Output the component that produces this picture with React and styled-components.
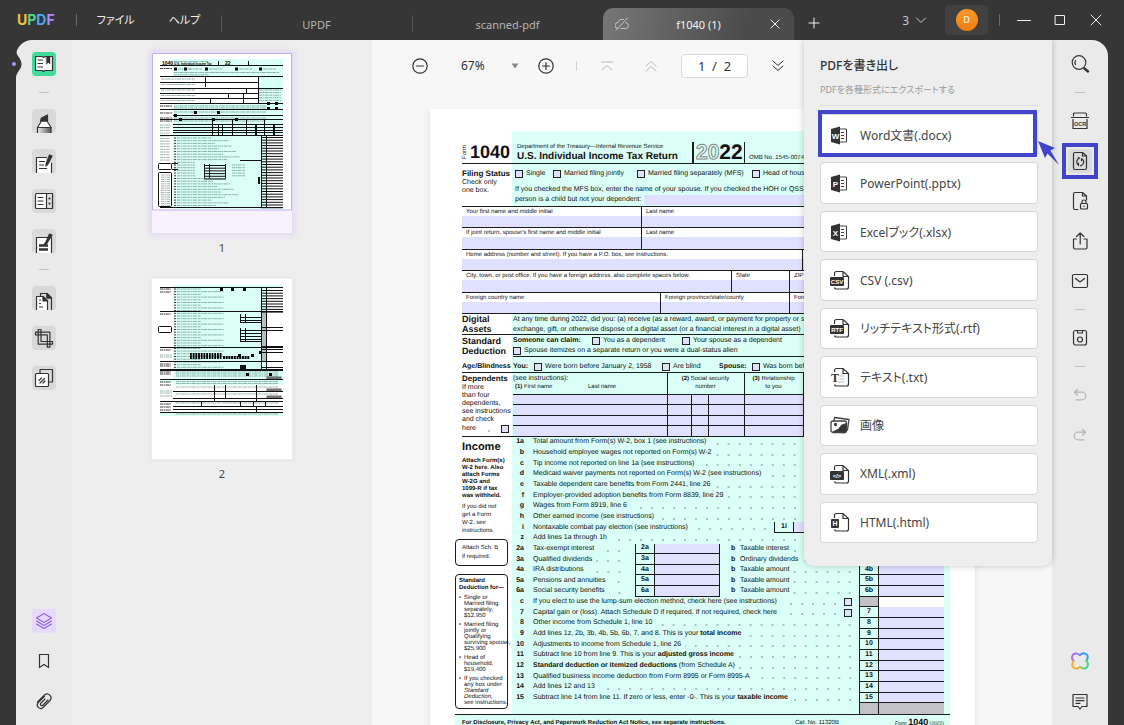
import React from 'react';
import styled, { createGlobalStyle, css } from 'styled-components';

const uiFont = '"Noto Sans", "Noto Sans CJK JP", sans-serif';
const formFont = '"Liberation Sans", Arial, sans-serif';

const colors = {
  chrome: '#373636',
  rail: '#ebeaeb',
  panel: '#eeeeee',
  viewer: '#f7f7f7',
  ink: '#333333',
  muted: '#9a9a9a',
  blue: '#4145c9',
  mint: '#dafff6',
  field: '#dfe1ff',
  rule: '#1c1c1c',
};

const GlobalStyle = createGlobalStyle`
  * {
    box-sizing: border-box;
  }

  body {
    margin: 0;
    background: ${colors.chrome};
    font-family: ${uiFont};
    color: ${colors.ink};
  }

  button,
  input,
  select {
    margin: 0;
    padding: 0;
    border: 0;
    background: none;
    color: inherit;
    font: inherit;
  }

  svg {
    display: block;
    flex: none;
  }
`;

const Window = styled.div`
  display: flex;
  flex-direction: column;
  height: 100vh;
  overflow: hidden;
`;

/* ---------- title bar ---------- */

const TitleBar = styled.header`
  display: flex;
  flex: none;
  align-items: center;
  height: 40px;
  padding: 0 10px 0 17px;
  color: #f0f0f0;
`;

const Logo = styled.div`
  width: 39px;
  margin-right: 20px;
  font-family: Inter, sans-serif;
  font-size: 14px;
  font-weight: 700;
  line-height: 20px;
`;

const LogoLetter = styled.span`
  color: ${(props) => props.$color};
`;

const BarDivider = styled.span`
  width: 1px;
  height: 12px;
  background: #6a6a6a;
`;

const Menu = styled.nav`
  display: flex;
  margin-right: 2px;
  padding-left: 4px;
`;

const MenuButton = styled.button`
  width: 69px;
  font-size: 11px;
  line-height: 20px;
  font-feature-settings: 'palt';
`;

const Tabs = styled.div`
  display: flex;
  align-self: flex-end;
`;

const Tab = styled.button`
  display: flex;
  align-items: center;
  width: 191px;
  height: 32px;
  padding: 0 12px;
  font-size: 11px;
  color: ${(props) => (props.$active ? '#f2f2f2' : '#b4b4b4')};
  border-radius: 10px 10px 0 0;
  background: ${(props) => (props.$active
    ? 'linear-gradient(100deg, #777 0%, #4c4b4b 75%)'
    : 'linear-gradient(#575656, #575656) left 4px / 1px 20px no-repeat')};
`;

const TabTitle = styled.span`
  flex: 1;
`;

const TabAdd = styled.button`
  display: grid;
  place-items: center;
  width: 40px;
  height: 30px;
  margin-top: 6px;
`;

const Spacer = styled.div`
  flex: 1;
`;

const TabCount = styled.button`
  display: flex;
  align-items: center;
  gap: 6px;
  margin-right: 18px;
  font-size: 12px;
  color: #c8c8c8;
`;

const AvatarBox = styled.button`
  display: grid;
  place-items: center;
  width: 43px;
  height: 30px;
  margin-right: 11px;
  border-radius: 4px;
  background: #424141;
`;

const Avatar = styled.span`
  width: 22px;
  height: 22px;
  border-radius: 50%;
  background: linear-gradient(#fb9a2c, #ef7c0c);
  color: #fff;
  font-size: 9px;
  line-height: 22px;
  text-align: center;
`;

const WindowButtons = styled.div`
  display: flex;
  margin-left: 6px;
`;

const WindowButton = styled.button`
  display: grid;
  place-items: center;
  width: 36px;
  height: 30px;
`;

/* ---------- workspace ---------- */

const Workspace = styled.div`
  display: grid;
  grid-template-rows: minmax(0, 1fr);
  grid-template-columns: 56px 300px 1fr 56px;
  flex: 1;
  min-height: 0;
  margin: 0 16px;
  border-radius: 16px 16px 0 0;
  background: ${colors.rail};
`;

const Rail = styled.aside`
  position: relative;
  display: flex;
  flex-direction: column;
  align-items: center;
  gap: 16px;
  padding: 12px 0;
`;

const RailNotch = styled.svg`
  position: absolute;
  top: 4px;
  left: -6px;
`;

const RailButton = styled.button`
  position: relative;
  display: grid;
  flex: none;
  place-items: center;
  width: 24px;
  height: 24px;
  border-radius: 4px;
  background: ${(props) => props.$fill || 'none'};
  color: ${(props) => props.$color || '#333'};

  ${(props) => props.$marked && css`
    &::after {
      content: '';
      position: absolute;
      inset: -6px;
      border: 4px solid ${colors.blue};
    }
  `}
`;

const RailLine = styled.span`
  flex: none;
  width: 10px;
  height: 1px;
  background: #c4c4c4;
`;

/* negative margins take back the gap that the rail adds round it */
const RailSpacer = styled.div`
  flex: 1;
  margin: -8px 0;
`;

const Thumbnails = styled.section`
  display: flex;
  flex-direction: column;
  align-items: center;
  padding-top: 12px;
  background: #efeeef;
`;

const ThumbButton = styled.button`
  display: flex;
  flex-direction: column;
  align-items: center;
  margin-bottom: 18px;
  font-size: 11px;
  line-height: 24px;
  color: #444;
`;

const ThumbFrame = styled.span`
  display: block;
  width: 142px;
  margin-bottom: 2px;
  padding: 1px;
  background: ${(props) => (props.$active ? '#e4dcf8' : 'transparent')};
  box-shadow: ${(props) => (props.$active ? '0 0 5px 3px #e4e0ec' : '0 0 3px #ddd')};
`;

/* ---------- viewer ---------- */

const Viewer = styled.main`
  position: relative;
  display: flex;
  flex-direction: column;
  min-width: 0;
  background: ${colors.viewer};
`;

const ViewerTools = styled.div`
  display: flex;
  flex: none;
  align-items: center;
  height: 69px;
  padding: 0 38px 17px;
`;

const ToolButton = styled.button`
  display: grid;
  place-items: center;
  width: 20px;
  height: 20px;
  margin-right: ${(props) => props.$gap || 0}px;
`;

const ZoomSelect = styled.select`
  width: 44px;
  margin-left: 31px;
  appearance: none;
  font-size: 12px;
  line-height: 20px;
`;

const ToolDivider = styled.span`
  width: 1px;
  height: 10px;
  margin-right: 20px;
  background: #d2d2d2;
`;

const PageInput = styled.input`
  width: 67px;
  height: 24px;
  margin-right: 20px;
  border: 1px solid #d9d9d9;
  border-radius: 4px;
  background: #fff;
  font-size: 13px;
  text-align: center;
`;

const PageArea = styled.div`
  flex: 1;
  min-height: 0;
  overflow: hidden;
  padding: 0 77px 0 58px;
`;

const Sheet = styled.article`
  min-height: 720px;
  padding: 22px 25px 0 32px;
  background: #fff;
  box-shadow: 0 0 5px #ddd;
  color: #111;
  font-family: ${formFont};
  font-size: 7px;
  line-height: 10px;
  text-rendering: geometricPrecision;
  white-space: nowrap;
`;

/* ---------- tax form ---------- */

const Section = styled.section`
  display: grid;
  grid-template-rows: minmax(0, 1fr);
  grid-template-columns: 50px minmax(0, 1fr);
  height: ${(props) => props.$height}px;
  border-bottom: ${(props) => (props.$rule ? 1 : 0)}px solid ${colors.rule};
`;

const Side = styled.div`
  padding-top: ${(props) => props.$top || 0}px;
  line-height: 8px;
`;

const SideTitle = styled.h3`
  margin: 0;
  font-size: ${(props) => props.$size || 9}px;
  line-height: ${(props) => props.$line || 10}px;
`;

const Mint = styled.div`
  min-width: 0;
  overflow: hidden;
  background: ${colors.mint};
  padding: ${(props) => props.$pad || '0'};
`;

const HeaderSide = styled.div`
  display: flex;
  align-items: flex-end;
  gap: 2px;
`;

const FormWord = styled.span`
  writing-mode: vertical-rl;
  rotate: 180deg;
  font-size: 6px;
  line-height: 6px;
  margin-bottom: 4px;
`;

const FormNumber = styled.strong`
  font-size: 18px;
  line-height: 22px;
`;

const HeaderMain = styled.div`
  display: flex;
  align-items: flex-end;
  height: 32px;
  padding-left: 5px;
`;

const HeaderTitle = styled.div`
  width: 175px;
  font-size: 6px;
  line-height: 8px;
`;

const FormTitle = styled.h2`
  margin: 0;
  font-size: 10px;
  line-height: 12px;
`;

const Year = styled.div`
  width: 53px;
  height: 21px;
  padding-left: 2px;
  border: solid ${colors.rule};
  border-width: 0 1px 0 2px;
  font-size: 21px;
  font-weight: 700;
  line-height: 21px;
`;

const YearOutline = styled.span`
  color: transparent;
  -webkit-text-stroke: 1px #888;
`;

const Omb = styled.span`
  padding-left: 4px;
  font-size: 6px;
`;

const Line = styled.div`
  display: flex;
  align-items: center;
  height: ${(props) => props.$height || 10}px;
  margin-top: ${(props) => props.$top || 0}px;
  border-bottom: ${(props) => (props.$rule ? 1 : 0)}px solid ${colors.rule};
`;

const CheckLabel = styled.label`
  display: flex;
  flex: none;
  align-items: center;
  gap: 3px;
  width: ${(props) => (props.$width ? `${props.$width}px` : 'auto')};
  height: 10px;
`;

const Check = styled.input`
  flex: none;
  width: 8px;
  height: 8px;
  appearance: none;
  border: 1px solid #222;
  background: ${colors.field};
`;

const BoxGap = styled.span`
  width: 7px;
`;

const Bold = styled.b`
  flex: none;
  width: ${(props) => (props.$width ? `${props.$width}px` : 'auto')};
`;

const Fields = styled.div`
  display: grid;
  grid-template-rows: repeat(5, 1fr);
  height: 107px;
  margin-right: 6px;
`;

const FieldRow = styled.div`
  display: grid;
  grid-template-columns: ${(props) => props.$columns};
  border-bottom: 1px solid ${colors.rule};
`;

const Field = styled.label`
  display: flex;
  flex-direction: column;
  min-width: 0;
  overflow: hidden;
  padding-top: 1px;
  border-right: 1px solid ${colors.rule};
  font-size: 6px;
  line-height: 8px;
  text-indent: 4px;
`;

const FieldInput = styled.input`
  flex: 1;
  width: 100%;
  min-height: 0;
  background: ${colors.field};
`;

const DependentTable = styled.table`
  width: 431px;
  height: 64px;
  border-collapse: collapse;
  table-layout: fixed;
  font-size: 6px;
  line-height: 8px;

  th {
    height: 21px;
    padding: 0;
    border-right: 1px solid ${colors.rule};
    font-weight: 400;
  }

  td {
    padding: 0;
    border: 1px solid ${colors.rule};
    border-left: 0;
    background: ${colors.field};
  }

  input {
    display: block;
    width: 100%;
    height: 9px;
  }
`;

const NameHead = styled.div`
  display: grid;
  grid-template-columns: 73px 1fr;
  text-align: left;
  padding-left: 2px;
`;

const SeeNote = styled.div`
  text-align: left;
  font-size: 7px;
`;

const Income = styled.div`
  display: grid;
  grid-template-rows: minmax(0, 1fr);
  grid-template-columns: 50px minmax(0, 1fr);
  height: 277px;
`;

const IncomeSide = styled.div`
  display: flex;
  flex-direction: column;
  font-size: 6px;
  line-height: 8px;
`;

const AttachNote = styled.p`
  margin: ${(props) => props.$margin};
  font-size: 6px;
  font-weight: ${(props) => (props.$bold ? 700 : 400)};
  line-height: ${(props) => (props.$bold ? 7 : 8)}px;
`;

const SideBox = styled.div`
  display: flex;
  flex: none;
  flex-direction: column;
  justify-content: ${(props) => (props.$center ? 'center' : 'flex-start')};
  width: 53px;
  height: ${(props) => props.$height}px;
  margin: 0 0 8px -7px;
  padding: ${(props) => props.$pad};
  border: 1px solid ${colors.rule};
  border-radius: 4px;
  background: #fff;
  line-height: ${(props) => props.$line}px;
`;

const Bullets = styled.ul`
  margin: 0;
  padding: 0 0 0 5px;
  list-style: none;
  line-height: 6px;

  li {
    position: relative;
    margin-top: 3px;
  }

  li::before {
    content: '•';
    position: absolute;
    left: -5px;
  }
`;

const IncomeRows = styled.div`
  display: grid;
  grid-template-rows: repeat(26, minmax(0, 1fr));
  padding-right: 6px;
  background: ${colors.mint};
`;

const IncomeRow = styled.div`
  display: flex;
  align-items: center;
  min-width: 0;
`;

const RowNumber = styled.b`
  width: 12px;
  margin-right: 9px;
  text-align: right;
`;

const RowText = styled.span`
  flex: none;
`;

const Leader = styled.span`
  flex: 1;
  align-self: stretch;
  margin-left: 4px;
  background: radial-gradient(circle at 2px 7px, #333 0, transparent 1px) right top / 11px 100%;
`;

const FirstAmount = styled.span`
  display: flex;
  flex: none;
  align-items: center;
  width: 102px;
  height: 100%;
`;

const BoxNumber = styled.b`
  display: flex;
  flex: none;
  align-items: center;
  align-self: stretch;
  justify-content: center;
  width: 20px;
  border: 1px solid ${colors.rule};
  border-top: 0;
  border-bottom-width: ${(props) => (props.$open ? 0 : 1)}px;
  background: ${(props) => props.$fill || 'transparent'};
`;

const BoxAmount = styled.input`
  flex: none;
  align-self: stretch;
  width: 65px;
  min-height: 0;
  border-bottom: 1px solid ${colors.rule};
  border-right: ${(props) => (props.$closed ? 1 : 0)}px solid ${colors.rule};
  background: ${colors.field};
`;

const BoxBlank = styled.span`
  flex: none;
  align-self: stretch;
  width: 65px;
  background: ${(props) => props.$fill};
`;

const LetterB = styled.b`
  width: 9px;
  margin-left: 11px;
`;

const FormFooter = styled.footer`
  display: flex;
  align-items: center;
  height: 16px;
  margin-left: -7px;
  padding: 0 6px 0 7px;
  border-top: 1px solid ${colors.rule};
  background: ${colors.mint};
  font-size: 6px;
`;

const FooterNotice = styled.b`
  width: 333px;
`;

const FooterForm = styled.span`
  margin-left: auto;
  font-size: 5px;

  b {
    font-size: 9px;
  }
`;

/* ---------- export popover ---------- */

const ExportPanel = styled.section`
  position: absolute;
  top: 0;
  right: 0;
  width: 248px;
  padding: 16px 14px 23px 16px;
  border-radius: 0 0 10px 10px;
  background: ${colors.panel};
  box-shadow: 0 0 7px rgba(0, 0, 0, 0.22);
  clip-path: inset(0 -10px -10px -10px);
`;

const ExportTitle = styled.h1`
  margin: 0;
  font-size: 12px;
  font-weight: 500;
  line-height: 20px;
  font-feature-settings: 'palt';
`;

const ExportHint = styled.p`
  margin: 6px 0 0;
  padding-bottom: 7px;
  border-bottom: 1px solid #dedede;
  color: ${colors.muted};
  font-size: 9px;
  line-height: 16px;
  font-feature-settings: 'palt';
`;

const ExportList = styled.div`
  display: grid;
  grid-template-rows: repeat(9, 1fr);
  gap: 7px;
  height: 429px;
  margin-top: 8px;
`;

const ExportButton = styled.button`
  position: relative;
  display: flex;
  align-items: center;
  gap: 10px;
  padding-left: 9px;
  border: 1px solid #d8d8d8;
  border-radius: 4px;
  background: #fff;
  color: #444;
  font-size: 12px;
  font-feature-settings: 'palt';

  ${(props) => props.$marked && css`
    &::after {
      content: '';
      position: absolute;
      inset: -5px 0 -3px -3px;
      border: 4px solid ${colors.blue};
      border-radius: 1px;
    }
  `}
`;

const Pointer = styled.svg`
  position: absolute;
  top: 100px;
  right: -8px;
  z-index: 1;
`;

/* ---------- icons ---------- */

const Icon = ({ size = 20, width = 1.2, children }) => (
  <svg
    width={size}
    height={size}
    viewBox={`0 0 ${size} ${size}`}
    fill="none"
    stroke="currentColor"
    strokeWidth={width}
    strokeLinecap="round"
    strokeLinejoin="round"
    aria-hidden="true"
  >
    {children}
  </svg>
);

const ReaderIcon = () => (
  <Icon size={24}>
    <path d="M3.5 4.5H10l1.500 1 1.500-1h7.500v14H13l-1.500 1-1.500-1H3.500z" fill="#fff" />
    <path d="M6 8h4.500M6 11.500h4.500M6 15h4.500" />
    <path d="M14.500 5h3.500v7l-1.750-1.500L14.500 12z" fill="#333" strokeWidth="0.5" />
  </Icon>
);

const HighlighterIcon = () => (
  <Icon size={24}>
    <defs>
      <linearGradient id="marker">
        <stop offset="0" stopColor="#eee" />
        <stop offset="1" stopColor="#555" />
      </linearGradient>
    </defs>
    <path d="M5.500 18.500l4-6.500h5.500l4 6.500z" fill="#fff" />
    <path d="M8.500 12L9.500 9l6-3v6z" fill="#333" />
    <path d="M5.500 18.500h13.500V25H5.500z" fill="url(#marker)" />
  </Icon>
);

const EditIcon = () => (
  <Icon size={24}>
    <path d="M4.500 24V8.500h10l-1.500 9 6.500-5V24z" fill="#fff" stroke="none" />
    <path d="M4.500 24V8.500h10M19.500 24V14" />
    <path d="M7.500 12.500h5M7.500 16h4M7.500 19.500h7" />
    <path d="M17.500 6L14.500 14l-.5 3 2-2L20 7z" fill="#333" />
  </Icon>
);

const FormIcon = () => (
  <Icon size={24}>
    <rect x="3.5" y="4.5" width="17" height="15" rx="1" fill="#fff" />
    <path d="M14.500 4.500h6v15h-6z" fill="#ddd" />
    <path d="M6 8.500h5M6 12h5M6 15.500h5" />
    <path d="M17.500 8l1.500 2.200h-3zM17.500 16l1.500-2.200h-3z" fill="#333" stroke="none" />
  </Icon>
);

const SignPageIcon = () => (
  <Icon size={24}>
    <path d="M4.500 24V8.500h15V24" fill="#fff" />
    <path d="M7 16.500h9M7 20.500h9" strokeWidth="2.5" strokeLinecap="butt" />
    <path d="M17.500 5l-4 9-1.500 1.500 2.500-.5L20 6z" fill="#333" />
  </Icon>
);

const OrganizeIcon = () => (
  <Icon size={24}>
    <path d="M8.500 10V7.500H15l4.500 4.500v12M15 7.500V12h4.500" />
    <path d="M4.500 24V10.500H11l4.500 4.500v9" fill="#fff" />
    <path d="M11 10.500V15h4.500zM15 7.500V12h4.500z" fill="#333" />
    <path d="M7.500 14h1M7.500 17.500h1M7.500 21h3" />
  </Icon>
);

const CropIcon = () => (
  <Icon size={24}>
    <path d="M6.200 3.500H9v12h11.500v2.700H6.200zM3.500 6.200h14.400v15h-2.600V8.800H3.500z" />
  </Icon>
);

const CompareIcon = () => (
  <Icon size={24}>
    <path d="M8 7V3.500h12.500V16H17" />
    <rect x="3.500" y="7.500" width="13" height="13" rx="1" fill="#fff" />
    <path d="M7 14.500l2.500-2.500M8 17l4.500-4.500M11 17l2-2" />
  </Icon>
);

const LayersIcon = () => (
  <Icon width={1.1}>
    <path d="M10 2.500l7.500 4.500-7.500 4.500L2.500 7zM2.500 10l7.500 4.500 7.500-4.500M2.500 13l7.500 4.500 7.500-4.500" />
  </Icon>
);

const BookmarkIcon = () => (
  <Icon><path d="M5.500 3.500h9v13L10 13.500l-4.500 3z" strokeLinejoin="miter" /></Icon>
);

const ClipIcon = () => (
  <Icon>
    <path d="M3.500 11L10.500 4a3.900 3.900 0 0 1 5.500 5.500l-7 7a3.400 3.400 0 0 1-4.800-4.800l6.300-6.300M11 8l-4.500 4.500a1.500 1.500 0 0 0 2 2L14 9" />
  </Icon>
);

const SearchIcon = () => (
  <Icon>
    <circle cx="9" cy="8.500" r="6.800" />
    <path d="M5.500 10.500a4 4 0 0 1 0-4" />
    <path d="M14.500 14.500l3.500 3" strokeWidth="2.400" />
  </Icon>
);

const OcrIcon = () => (
  <svg width="20" height="20" viewBox="0 0 20 20" fill="none" stroke="#333" strokeWidth="1.2" aria-hidden="true">
    <path d="M3.500 5.500V3a1 1 0 0 1 1-1h11a1 1 0 0 1 1 1v2.500M1 6.500h18M3 8v9.500h14V8" />
    <text x="10" y="15" textAnchor="middle" fontFamily="Liberation Sans" fontWeight="700" fontSize="5.5" fill="#333" stroke="none">OCR</text>
  </svg>
);

const ExportIcon = () => (
  <Icon>
    <path d="M5 1.500h7.500L16.500 5v12a1.500 1.500 0 0 1-1.500 1.500H5A1.500 1.500 0 0 1 3.500 17V3A1.500 1.500 0 0 1 5 1.500zM12.500 1.500V5h4" />
    <path d="M9.500 7.200a3.800 3.800 0 0 0-1.500 6.500M8.500 14.500V12M10.500 14.800a3.800 3.800 0 0 0 2-6.500M11.500 7.500v2.200M9.500 7.200l-1-.7" />
  </Icon>
);

const ProtectIcon = () => (
  <Icon>
    <path d="M8 18.500H5A1.500 1.500 0 0 1 3.500 17V3A1.500 1.500 0 0 1 5 1.500h7.500L16.500 5v4M12.500 1.500V5h4" />
    <rect x="10.500" y="12.500" width="7" height="5.500" rx="1" />
    <path d="M12 12.500V11a2 2 0 0 1 4 0v1.500M14 15v.5" />
  </Icon>
);

const ShareIcon = () => (
  <Icon>
    <path d="M6.500 8h-3v8.500A1.500 1.500 0 0 0 5 18h10.500a1.500 1.500 0 0 0 1.500-1.500V8h-3M10.200 13V2M6.500 5.500L10.200 2l3.700 3.500" />
  </Icon>
);

const MailIcon = () => (
  <Icon>
    <rect x="2.500" y="3.500" width="15" height="13" rx="1.5" />
    <path d="M5.500 7.500l4.500 3.500 4.500-3.500" />
  </Icon>
);

const SaveIcon = () => (
  <Icon>
    <rect x="3.500" y="2.500" width="13" height="14.500" rx="2" />
    <circle cx="10" cy="11.500" r="2.500" />
    <path d="M7.500 2.500V5h5V2.500" />
  </Icon>
);

const UndoIcon = () => (
  <Icon><path d="M7.500 4.500L4.500 7.200l3 2.800M4.500 7.200H12a3.800 3.800 0 0 1 0 7.600H6" /></Icon>
);

const RedoIcon = () => (
  <Icon><path d="M12.500 4.500l3 2.700-3 2.800M15.500 7.200H8a3.800 3.800 0 0 0 0 7.600h6" /></Icon>
);

const AiIcon = () => (
  <svg width="20" height="20" viewBox="0 0 20 20" fill="none" strokeWidth="2" strokeLinecap="round" aria-hidden="true">
    <path d="M3.500 10C.5 7 2.500 1.800 6.500 2.500 8.500 2.800 9 4 10 4" stroke="#a873ec" />
    <path d="M10 4C13 1 18.200 2.500 17.700 6.500 17.400 8.500 16.500 9 16.500 10" stroke="#3f9df0" />
    <path d="M16.500 10c3 3 1 8.200-3 7.500-2-.3-2.500-1.500-3.500-1.500" stroke="#4fd68f" />
    <path d="M10 16c-3 3-8.200 1-7.700-2.500.3-2 1.200-2.500 1.200-3.500" stroke="#f3b334" />
  </svg>
);

const NoteIcon = () => (
  <Icon>
    <path d="M3 3.500h14v12h-5L10 18l-2-2.500H3zM6 7h8M6 9.700h8M6 12.300h4" />
  </Icon>
);

const OfficeIcon = ({ letter }) => (
  <svg width="20" height="20" viewBox="0 0 20 20" aria-hidden="true">
    <path d="M9 4h7.500v13H9M11 7.500h3M11 10.500h3M11 13.500h3" fill="none" stroke="#444" />
    <path d="M1 4l9-2.500v18L1 17z" fill="#333" />
    <text x="5.500" y="13.500" textAnchor="middle" fontFamily="Liberation Sans" fontWeight="700" fontSize="8" fill="#fff">{letter}</text>
  </svg>
);

const BadgeFileIcon = ({ text, wide }) => (
  <svg width="20" height="20" viewBox="0 0 20 20" aria-hidden="true">
    <path d="M4.500 6V3.500a2 2 0 0 1 2-2H13l5.500 5V17a2 2 0 0 1-2 2h-10a2 2 0 0 1-2-1.500M13 1.500v5h5.500" fill="none" stroke="#333" strokeWidth="1.2" />
    <rect x={wide ? 0 : 1} y="7" width={wide ? 14 : 8} height="9" rx="1" fill="#333" />
    <text x={wide ? 7 : 5} y="13.7" textAnchor="middle" fontFamily="Liberation Sans" fontWeight="700" fontSize={wide ? 6 : 7} fill="#fff">{text}</text>
  </svg>
);

const TextFileIcon = () => (
  <svg width="20" height="20" viewBox="0 0 20 20" aria-hidden="true">
    <path d="M4.500 5V3.500a2 2 0 0 1 2-2H13l5.500 5V17a2 2 0 0 1-2 2h-10a2 2 0 0 1-2-1.500M13 1.500v5h5.500" fill="none" stroke="#333" strokeWidth="1.2" />
    <path d="M10 9h4M10 12h4M8 15h6" stroke="#bbb" />
    <text x="5" y="15" textAnchor="middle" fontFamily="Liberation Serif" fontWeight="700" fontSize="12" fill="#333">T</text>
  </svg>
);

const ImageIcon = () => (
  <Icon width={1.3}>
    <path d="M4 5.500l.5-3L19 4.500 17.500 15" />
    <rect x="1" y="6" width="15.500" height="11.500" rx="2" />
    <path d="M3 17l6-3 3-4 4.500-1.500V15l-2 2.500z" fill="#333" />
    <circle cx="5.500" cy="9.500" r="1" fill="#333" />
  </Icon>
);

const ZoomIcon = ({ plus }) => (
  <Icon>
    <circle cx="10" cy="10" r="7.2" />
    <path d={plus ? 'M6.500 10h7M10 6.500v7' : 'M6.500 10h7'} />
  </Icon>
);

/* ---------- page previews ---------- */

// [x, y, width, height] of the heavier rules on each page
const firstRules = [
  [8, 12, 123, 1], [8, 23, 123, 1], [8, 29, 98, 1], [8, 35, 123, 1], [8, 40, 98, 1], [8, 45, 98, 1],
  [8, 50, 123, 1], [8, 56, 123, 1], [21, 62, 110, 1], [8, 66, 123, 1], [21, 71, 110, 1],
  [21, 74, 110, 1], [21, 77, 110, 1], [21, 79, 110, 1], [8, 82, 123, 1], [106, 24, 1, 27],
  [53, 24, 1, 10], [76, 40, 1, 5], [91, 40, 1, 11], [94, 35, 1, 5], [58, 45, 1, 5],
  [66, 8, 1, 4], [96, 8, 1, 4], [60, 67, 1, 15], [80, 67, 1, 15], [94, 67, 1, 15], [112, 67, 1, 15],
  [66, 71, 1, 11], [70, 71, 1, 11], [103, 72, 2, 10], [121, 72, 2, 10],
  [109, 82, 1, 73], [114, 82, 1, 73], [88, 107, 22, 1], [52, 111, 1, 14], [57, 111, 1, 14], [73, 111, 1, 14],
  [106, 124, 2, 7], [8, 154, 123, 1], [20, 110, 6, 1], [20, 116, 6, 1],
];
const secondRules = [
  [8, 8, 123, 1], [8, 32, 123, 1], [8, 68, 123, 1], [8, 82, 123, 1], [8, 90, 123, 1], [8, 91, 123, 1],
  [8, 100, 123, 1], [21, 112, 110, 1], [21, 119, 110, 1], [8, 122, 123, 1], [21, 127, 110, 1],
  [21, 130, 110, 1], [8, 133, 123, 1], [109, 8, 1, 82], [114, 8, 1, 82],
  [62, 106, 1, 16], [73, 106, 1, 14], [104, 106, 1, 16], [49, 122, 1, 5], [88, 122, 1, 5], [101, 122, 1, 5],
  [113, 122, 1, 5], [104, 128, 1, 5], [88, 35, 1, 9], [93, 35, 1, 9], [88, 49, 1, 14], [93, 49, 1, 14], [88, 86, 6, 4],
];

const range = (from, to, step) => Array.from(
  { length: Math.ceil((to - from) / step) },
  (_, i) => from + i * step,
);

const PreviewText = ({ x, y, width, dark }) => (
  <path
    d={`M${x} ${y}h${width}`}
    stroke={dark ? '#111' : '#3d6b63'}
    strokeDasharray="3 .6 1.5 .5 4 .7"
    opacity={dark ? 0.8 : 0.5}
  />
);

const Rules = ({ items }) => items.map(([x, y, w, h]) => (
  <rect key={`${x}-${y}-${w}`} x={x} y={y} width={w} height={h} fill="#111" />
));

const FirstPreview = () => (
  <svg width="140" height="180" viewBox="0 0 140 180" aria-hidden="true">
    <path fill="#fff" d="M0 0h140v157H0z" />
    <path fill="#f8f2ff" d="M0 157h140v23H0z" />
    <path fill={colors.mint} d="M21 6h110v150H21z" />
    <path fill="#fff" d="M21 24h85v26H21zM115 83h16v71h-16z" />
    <text x="10" y="12" fontFamily="Liberation Sans" fontWeight="700" fontSize="5">1040</text>
    <text x="22" y="12" fontFamily="Liberation Sans" fontWeight="700" fontSize="3">U.S. Individual Income Tax</text>
    <text x="73" y="12" fontFamily="Liberation Sans" fontWeight="700" fontSize="5">22</text>
    <PreviewText x={22} y={8.5} width={34} />
    <PreviewText x={8} y={15.5} width={12} dark />
    {[22, 32, 53, 83, 107].map((x) => <rect key={x} x={x} y="14.5" width="3" height="3" />)}
    {[26, 37, 57, 87, 111].map((x) => <PreviewText key={x} x={x} y={16} width={13} />)}
    <PreviewText x={22} y={19.5} width={105} />
    <PreviewText x={22} y={21.8} width={35} />
    {[26, 31.5, 37, 42.5, 47.5].map((y) => <PreviewText key={y} x={9} y={y} width={34} />)}
    {range(37, 50, 2.6).map((y) => <PreviewText key={y} x={107} y={y} width={22} />)}
    {[53, 55, 59, 65, 68].map((y) => <PreviewText key={y} x={22} y={y} width={92} />)}
    {[53, 60, 65, 68].map((y) => <PreviewText key={y} x={8} y={y} width={12} dark />)}
    {[[42, 58], [65, 58], [22, 61], [27, 65], [60, 65], [83, 65], [115, 49], [123, 49], [115, 54], [123, 54]].map(([x, y]) => (
      <rect key={`${x}-${y}`} x={x} y={y} width="3" height="3" />
    ))}
    {range(72, 109, 2.7).map((y) => <PreviewText key={y} x={8} y={y} width={10} />)}
    {range(85, 155, 2.7).map((y, i) => <PreviewText key={y} x={25} y={y} width={i > 8 && i < 15 ? 18 : 34 + ((i * 17) % 30)} />)}
    {range(85, 155, 2.7).map((y) => <PreviewText key={y} x={22} y={y} width={2} dark />)}
    {range(112, 124, 2.7).map((y) => <PreviewText key={y} x={80} y={y} width={13} />)}
    {range(84, 155, 2.7).map((y) => <rect key={y} x="109" y={y} width="22" height="1" fill="#111" />)}
    {range(112, 126, 2.7).map((y) => <rect key={y} x="52" y={y} width="22" height="1" fill="#111" />)}
    <rect x="6.5" y="110.5" width="13" height="6" rx="1" fill="#fff" stroke="#111" />
    <rect x="6.5" y="119.5" width="13" height="34" rx="1" fill="#fff" stroke="#111" />
    {range(122, 153, 2.2).map((y) => <PreviewText key={y} x={9} y={y} width={9} />)}
    <Rules items={firstRules} />
    <path d="M.5.5h139v156.500H.5z" fill="none" stroke="#c3aef0" />
  </svg>
);

const SecondPreview = () => (
  <svg width="140" height="180" viewBox="0 0 140 180" aria-hidden="true">
    <path fill="#fff" d="M0 0h140v180H0z" />
    <path fill={colors.mint} d="M21 6h110v100H21zM8 100h123v3H8zM8 134h123v3H8z" />
    <path fill="#fff" d="M115 9h16v81h-16z" />
    <path fill="#b9bcc0" d="M109 32h5v50h-5z" />
    {range(10, 90, 2.7).map((y, i) => <PreviewText key={y} x={25} y={y} width={24 + ((i * 23) % 46)} />)}
    {range(10, 90, 2.7).map((y) => <PreviewText key={y} x={22} y={y} width={2} dark />)}
    {[10, 13, 35, 71, 85, 87, 93, 95, 103, 106, 125, 128, 131].map((y) => <PreviewText key={y} x={8} y={y} width={11} dark />)}
    {[76, 78, 112, 114, 117].map((y) => <PreviewText key={y} x={8} y={y} width={12} />)}
    {[93, 95, 97, 102.5, 104.5, 108, 115, 124, 135].map((y) => <PreviewText key={y} x={24} y={y} width={102} />)}
    {range(11, 33, 2.7).map((y) => <rect key={y} x="109" y={y} width="22" height="1" fill="#111" />)}
    {[48, 51, 67, 70, 73, 88].map((y) => <rect key={y} x="109" y={y} width="22" height="1" fill="#111" />)}
    {[38, 41, 43, 51, 54, 57, 60, 62].map((y) => <rect key={y} x="88" y={y} width="21" height="1" fill="#111" />)}
    {range(38, 70, 2.7).map((x) => <rect key={x} x={x} y="74" width="1.8" height="6" fill="#000" />)}
    {range(71, 97, 2.7).map((x) => <rect key={x} x={x} y="77" width="2" height="3" fill="#000" />)}
    {[[68, 9], [79, 9], [91, 9], [107, 72], [99, 75], [86, 75], [94, 94], [117, 94]].map(([x, y]) => (
      <rect key={`${x}-${y}`} x={x} y={y} width="3" height="3" />
    ))}
    {[98, 110, 117].map((y) => range(115, 130, 3).map((x) => (
      <rect key={`${x}-${y}`} x={x} y={y} width="2" height="2" fill="#fff" stroke="#111" strokeWidth="0.7" />
    )))}
    <rect x="6.5" y="47.5" width="13" height="6" rx="1" fill="#fff" stroke="#111" />
    <Rules items={secondRules} />
  </svg>
);

/* ---------- data ---------- */

const exportFormats = [
  { label: 'Word文書(.docx)', icon: <OfficeIcon letter="W" />, marked: true },
  { label: 'PowerPoint(.pptx)', icon: <OfficeIcon letter="P" /> },
  { label: 'Excelブック(.xlsx)', icon: <OfficeIcon letter="X" /> },
  { label: 'CSV (.csv)', icon: <BadgeFileIcon text="CSV" wide /> },
  { label: 'リッチテキスト形式(.rtf)', icon: <BadgeFileIcon text="RTF" wide /> },
  { label: 'テキスト(.txt)', icon: <TextFileIcon /> },
  { label: '画像', icon: <ImageIcon /> },
  { label: 'XML(.xml)', icon: <BadgeFileIcon text="</>" wide /> },
  { label: 'HTML(.html)', icon: <BadgeFileIcon text="H" /> },
];

const wageRows = [
  ['1a', 'Total amount from Form(s) W-2, box 1 (see instructions)'],
  ['b', 'Household employee wages not reported on Form(s) W-2'],
  ['c', 'Tip income not reported on line 1a (see instructions)'],
  ['d', 'Medicaid waiver payments not reported on Form(s) W-2 (see instructions)'],
  ['e', 'Taxable dependent care benefits from Form 2441, line 26'],
  ['f', 'Employer-provided adoption benefits from Form 8839, line 29'],
  ['g', 'Wages from Form 8919, line 6'],
  ['h', 'Other earned income (see instructions)'],
  ['i', 'Nontaxable combat pay election (see instructions)'],
  ['z', 'Add lines 1a through 1h'],
];

const pairRows = [
  ['2a', 'Tax-exempt interest', 'Taxable interest', ''],
  ['3a', 'Qualified dividends', 'Ordinary dividends', ''],
  ['4a', 'IRA distributions', 'Taxable amount', '4b'],
  ['5a', 'Pensions and annuities', 'Taxable amount', '5b'],
  ['6a', 'Social security benefits', 'Taxable amount', '6b'],
];

const totalRows = [
  ['8', 'Other income from Schedule 1, line 10'],
  ['9', <>Add lines 1z, 2b, 3b, 4b, 5b, 6b, 7, and 8. This is your <b>total income</b></>],
  ['10', 'Adjustments to income from Schedule 1, line 26'],
  ['11', <>Subtract line 10 from line 9. This is your <b>adjusted gross income</b></>],
  ['12', <><b>Standard deduction or itemized deductions</b> (from Schedule A)</>],
  ['13', 'Qualified business income deduction from Form 8995 or Form 8995-A'],
  ['14', 'Add lines 12 and 13'],
  ['15', <>Subtract line 14 from line 11. If zero or less, enter -0-. This is your <b>taxable income</b></>],
];

/* ---------- components ---------- */

const CheckOption = ({ children, width }) => (
  <CheckLabel $width={width}>
    <Check type="checkbox" />
    {children}
  </CheckLabel>
);

const TextField = ({ label }) => (
  <Field>
    {label}
    <FieldInput type="text" />
  </Field>
);

const Amount = ({ number, label }) => (
  <>
    <BoxNumber>{number}</BoxNumber>
    <BoxAmount type="text" aria-label={label || `Line ${number}`} />
  </>
);

const IncomeTable = () => (
  <IncomeRows>
    {wageRows.map(([number, text]) => (
      <IncomeRow key={number}>
        <RowNumber>{number}</RowNumber>
        <RowText>{text}</RowText>
        <Leader />
        {number === 'i' && <Amount number="1i" />}
        <Amount label={text} />
      </IncomeRow>
    ))}
    {pairRows.map(([number, text, second, secondNumber]) => (
      <IncomeRow key={number}>
        <RowNumber>{number}</RowNumber>
        <FirstAmount>
          {text}
          <Leader />
          <BoxGap />
        </FirstAmount>
        <BoxNumber>{number}</BoxNumber>
        <BoxAmount type="text" aria-label={`Line ${number}`} $closed />
        <LetterB>b</LetterB>
        <RowText>{second}</RowText>
        <Leader />
        <Amount number={secondNumber} label={second} />
      </IncomeRow>
    ))}
    <IncomeRow>
      <RowNumber>c</RowNumber>
      <RowText id="lump-sum">If you elect to use the lump-sum election method, check here (see instructions)</RowText>
      <Leader />
      <Check type="checkbox" aria-labelledby="lump-sum" />
      <BoxGap />
      <BoxNumber $fill="#c2c2c6" />
      <BoxBlank $fill="#fff" />
    </IncomeRow>
    <IncomeRow>
      <RowNumber>7</RowNumber>
      <RowText id="capital-gain">Capital gain or (loss). Attach Schedule D if required. If not required, check here</RowText>
      <Leader />
      <Check type="checkbox" aria-labelledby="capital-gain" />
      <BoxGap />
      <Amount number="7" />
    </IncomeRow>
    {totalRows.map(([number, text]) => (
      <IncomeRow key={number}>
        <RowNumber>{number}</RowNumber>
        <RowText>{text}</RowText>
        <Leader />
        <Amount number={number} />
      </IncomeRow>
    ))}
    <IncomeRow>
      <Spacer />
      <BoxNumber $fill="#c2c2c6" $open />
      <BoxBlank $fill="#c2c2c6" />
    </IncomeRow>
  </IncomeRows>
);

const TaxForm = () => (
  <Sheet>
    <Section $height={33} $rule>
      <HeaderSide>
        <FormWord>Form</FormWord>
        <FormNumber>1040</FormNumber>
      </HeaderSide>
      <Mint>
        <HeaderMain>
          <HeaderTitle>
            Department of the Treasury—Internal Revenue Service
            <FormTitle>U.S. Individual Income Tax Return</FormTitle>
          </HeaderTitle>
          <Year>
            <YearOutline>20</YearOutline>
            22
          </Year>
          <Omb>OMB No. 1545-0074</Omb>
        </HeaderMain>
      </Mint>
    </Section>
    <Section $height={43} $rule>
      <Side $top={5}>
        <SideTitle $size={8}>Filing Status</SideTitle>
        Check only
        <br />
        one box.
      </Side>
      <Mint $pad="4px 0 0 3px">
        <Line $height={12}>
          <CheckOption width={38}>Single</CheckOption>
          <CheckOption width={84}>Married filing jointly</CheckOption>
          <CheckOption width={115}>Married filing separately (MFS)</CheckOption>
          <CheckOption>Head of household (HOH)</CheckOption>
        </Line>
        <Line $top={5}>If you checked the MFS box, enter the name of your spouse. If you checked the HOH or QSS box</Line>
        <CheckLabel>
          person is a child but not your dependent:
          <FieldInput type="text" />
        </CheckLabel>
      </Mint>
    </Section>
    <Fields>
      <FieldRow $columns="180px 1fr">
        <TextField label="Your first name and middle initial" />
        <TextField label="Last name" />
      </FieldRow>
      <FieldRow $columns="180px 1fr">
        <TextField label="If joint return, spouse’s first name and middle initial" />
        <TextField label="Last name" />
      </FieldRow>
      <FieldRow $columns="341px 1fr">
        <TextField label="Home address (number and street). If you have a P.O. box, see instructions." />
        <TextField label="Apt. no." />
      </FieldRow>
      <FieldRow $columns="270px 58px 1fr">
        <TextField label="City, town, or post office. If you have a foreign address, also complete spaces below." />
        <TextField label="State" />
        <TextField label="ZIP code" />
      </FieldRow>
      <FieldRow $columns="199px 129px 1fr">
        <TextField label="Foreign country name" />
        <TextField label="Foreign province/state/county" />
        <TextField label="Foreign postal code" />
      </FieldRow>
    </Fields>
    <Section $height={21} $rule>
      <Side>
        <SideTitle>Digital</SideTitle>
        <SideTitle>Assets</SideTitle>
      </Side>
      <Mint $pad="1px 0 0 1px">
        <Line>At any time during 2022, did you: (a) receive (as a reward, award, or payment for property or services)</Line>
        <Line>exchange, gift, or otherwise dispose of a digital asset (or a financial interest in a digital asset)</Line>
      </Mint>
    </Section>
    <Section $height={38} $rule>
      <Side $top={1}>
        <SideTitle>Standard</SideTitle>
        <SideTitle>Deduction</SideTitle>
        <SideTitle $size={7} $line={22}>Age/Blindness</SideTitle>
      </Side>
      <Mint $pad="0 0 0 1px">
        <Line $height={11}>
          <Bold $width={79}>Someone can claim:</Bold>
          <CheckOption width={90}>You as a dependent</CheckOption>
          <CheckOption>Your spouse as a dependent</CheckOption>
        </Line>
        <Line $height={11} $rule>
          <CheckOption>Spouse itemizes on a separate return or you were a dual-status alien</CheckOption>
        </Line>
        <Line $height={20}>
          <Bold $width={21}>You:</Bold>
          <CheckOption width={128}>Were born before January 2, 1958</CheckOption>
          <CheckOption width={57}>Are blind</CheckOption>
          <Bold $width={33}>Spouse:</Bold>
          <CheckOption>Was born before January 2, 1958</CheckOption>
        </Line>
      </Mint>
    </Section>
    <Section $height={64} $rule>
      <Side $top={1}>
        <SideTitle $size={8}>Dependents</SideTitle>
        If more
        <br />
        than four
        <br />
        dependents,
        <br />
        see instructions
        <br />
        and check
        <CheckLabel htmlFor="more-dependents" $width={47}>
          here
          <Leader />
          <Check id="more-dependents" type="checkbox" />
        </CheckLabel>
      </Side>
      <Mint $pad="0 0 0 1px">
        <DependentTable>
          <colgroup>
            <col width="154" />
            <col width="24" />
            <col width="17" />
            <col width="36" />
            <col width="59" />
            <col />
          </colgroup>
          <thead>
            <tr>
              <th>
                <SeeNote>(see instructions):</SeeNote>
                <NameHead>
                  <span><b>(1)</b> First name</span>
                  <span>Last name</span>
                </NameHead>
              </th>
              <th colSpan={3}>
                <b>(2)</b> Social security
                <br />
                number
              </th>
              <th>
                <b>(3)</b> Relationship
                <br />
                to you
              </th>
              <th aria-label="Credits" />
            </tr>
          </thead>
          <tbody>
            {[1, 2, 3, 4].map((row) => (
              <tr key={row}>
                {[1, 2, 3, 4, 5, 6].map((column) => (
                  <td key={column}><input type="text" aria-label={`Dependent ${row}, box ${column}`} /></td>
                ))}
              </tr>
            ))}
          </tbody>
        </DependentTable>
      </Mint>
    </Section>
    <Income>
      <IncomeSide>
        <SideTitle $size={11} $line={20}>Income</SideTitle>
        <AttachNote $bold $margin="1px 0 3px">
          Attach Form(s)
          <br />
          W-2 here. Also
          <br />
          attach Forms
          <br />
          W-2G and
          <br />
          1099-R if tax
          <br />
          was withheld.
        </AttachNote>
        <AttachNote $margin="0 0 4px">
          If you did not
          <br />
          get a Form
          <br />
          W-2, see
          <br />
          instructions.
        </AttachNote>
        <SideBox $height={27} $line={9} $pad="0 0 0 6px" $center>
          <span>Attach Sch. B</span>
          <span>if required.</span>
        </SideBox>
        <SideBox $height={135} $line={7} $pad="3px 0 0 3px">
          <b>Standard</b>
          <b>Deduction for—</b>
          <Bullets>
            <li>Single or<br />Married filing<br />separately,<br />$12,950</li>
            <li>Married filing<br />jointly or<br />Qualifying<br />surviving spouse,<br />$25,900</li>
            <li>Head of<br />household,<br />$19,400</li>
            <li>If you checked<br />any box under<br /><i>Standard<br />Deduction,</i><br />see instructions.</li>
          </Bullets>
        </SideBox>
      </IncomeSide>
      <IncomeTable />
    </Income>
    <FormFooter>
      <FooterNotice>For Disclosure, Privacy Act, and Paperwork Reduction Act Notice, see separate instructions.</FooterNotice>
      <span>Cat. No. 11320B</span>
      <FooterForm>Form <b>1040</b> (2022)</FooterForm>
    </FormFooter>
  </Sheet>
);

const ExportPopover = () => (
  <>
    <ExportPanel>
      <ExportTitle>PDFを書き出し</ExportTitle>
      <ExportHint>PDFを各種形式にエクスポートする</ExportHint>
      <ExportList>
        {exportFormats.map(({ label, icon, marked }) => (
          <ExportButton key={label} type="button" $marked={marked}>
            {icon}
            {label}
          </ExportButton>
        ))}
      </ExportList>
    </ExportPanel>
    <Pointer width="24" height="28" viewBox="0 0 24 28" aria-hidden="true">
      <path d="M2 1l17 7-4.500 2.500L23 25 11.500 13.500 9 18z" fill={colors.blue} />
    </Pointer>
  </>
);

const TopBar = () => (
  <TitleBar>
    <Logo>
      <LogoLetter $color="#f7c233">U</LogoLetter>
      <LogoLetter $color="#4fd68f">P</LogoLetter>
      <LogoLetter $color="#4aa9ec">D</LogoLetter>
      <LogoLetter $color="#b18cf2">F</LogoLetter>
    </Logo>
    <BarDivider />
    <Menu>
      <MenuButton type="button">ファイル</MenuButton>
      <MenuButton type="button">ヘルプ</MenuButton>
    </Menu>
    <Tabs>
      <Tab type="button"><TabTitle>UPDF</TabTitle></Tab>
      <Tab type="button"><TabTitle>scanned-pdf</TabTitle></Tab>
      <Tab type="button" $active>
        <Icon size={14} width={1}>
          <path stroke="#c4c4c4" d="M3 11.500a3 3 0 0 1 0-6A4.200 4.200 0 0 1 8.500 2.500M10.500 5.500a3 3 0 0 1 0 6H6M1.500 13L12.500 1" />
        </Icon>
        <TabTitle>f1040 (1)</TabTitle>
        <Icon size={14} width={1}><path d="M3 3l8 8M11 3l-8 8" /></Icon>
      </Tab>
    </Tabs>
    <TabAdd type="button" aria-label="New tab">
      <Icon size={14} width={1}><path d="M7 2v10M2 7h10" /></Icon>
    </TabAdd>
    <Spacer />
    <TabCount type="button">
      3
      <Icon size={12} width={1}><path d="M1.500 4L6 8.500 10.500 4" /></Icon>
    </TabCount>
    <AvatarBox type="button"><Avatar>D</Avatar></AvatarBox>
    <BarDivider />
    <WindowButtons>
      <WindowButton type="button" aria-label="Minimize">
        <Icon size={14} width={1}><path d="M.5 7.500h13" /></Icon>
      </WindowButton>
      <WindowButton type="button" aria-label="Maximize">
        <Icon size={14} width={1}><path d="M2.500 2.500h9v9h-9z" /></Icon>
      </WindowButton>
      <WindowButton type="button" aria-label="Close">
        <Icon size={14} width={1}><path d="M2 2l10 10M12 2L2 12" /></Icon>
      </WindowButton>
    </WindowButtons>
  </TitleBar>
);

const LeftRail = () => (
  <Rail>
    <RailNotch width="13" height="40" viewBox="0 0 13 40" aria-hidden="true">
      <path d="M6 6c0 6 5.500 8 5.500 14S6 28 6 34z" fill={colors.chrome} />
      <circle cx="4" cy="20" r="2" fill="#b18cf2" />
    </RailNotch>
    <RailButton type="button" aria-label="Reader" $fill="#3fdc9c"><ReaderIcon /></RailButton>
    <RailLine />
    <RailButton type="button" aria-label="Highlight" $fill="#dad9da"><HighlighterIcon /></RailButton>
    <RailButton type="button" aria-label="Edit" $fill="#dad9da"><EditIcon /></RailButton>
    <RailButton type="button" aria-label="Form" $fill="#dad9da"><FormIcon /></RailButton>
    <RailButton type="button" aria-label="Sign" $fill="#dad9da"><SignPageIcon /></RailButton>
    <RailLine />
    <RailButton type="button" aria-label="Organize pages" $fill="#dad9da"><OrganizeIcon /></RailButton>
    <RailButton type="button" aria-label="Crop" $fill="#dad9da"><CropIcon /></RailButton>
    <RailButton type="button" aria-label="Watermark" $fill="#dad9da"><CompareIcon /></RailButton>
    <RailSpacer />
    <RailButton type="button" aria-label="Layers" $fill="#e6d9fb" $color="#9363dd"><LayersIcon /></RailButton>
    <RailButton type="button" aria-label="Bookmarks"><BookmarkIcon /></RailButton>
    <RailButton type="button" aria-label="Attachments"><ClipIcon /></RailButton>
  </Rail>
);

const RightRail = () => (
  <Rail>
    <RailButton type="button" aria-label="Search"><SearchIcon /></RailButton>
    <RailLine />
    <RailButton type="button" aria-label="OCR"><OcrIcon /></RailButton>
    <RailButton type="button" aria-label="Export" $fill="#dadada" $marked><ExportIcon /></RailButton>
    <RailButton type="button" aria-label="Protect"><ProtectIcon /></RailButton>
    <RailButton type="button" aria-label="Share"><ShareIcon /></RailButton>
    <RailButton type="button" aria-label="Mail"><MailIcon /></RailButton>
    <RailLine />
    <RailButton type="button" aria-label="Save"><SaveIcon /></RailButton>
    <RailLine />
    <RailButton type="button" aria-label="Undo" $color="#b5b5b5"><UndoIcon /></RailButton>
    <RailButton type="button" aria-label="Redo" $color="#b5b5b5"><RedoIcon /></RailButton>
    <RailSpacer />
    <RailButton type="button" aria-label="Assistant"><AiIcon /></RailButton>
    <RailButton type="button" aria-label="Comments"><NoteIcon /></RailButton>
  </Rail>
);

const ViewerToolbar = () => (
  <ViewerTools>
    <ToolButton type="button" aria-label="Zoom out"><ZoomIcon /></ToolButton>
    <ZoomSelect aria-label="Zoom" defaultValue="67%">
      <option>67%</option>
    </ZoomSelect>
    <ToolButton type="button" aria-label="Zoom levels" $gap={11}>
      <svg width="8" height="6" viewBox="0 0 8 6"><path d="M.5.5h7L4 5.500z" fill="#888" /></svg>
    </ToolButton>
    <ToolButton type="button" aria-label="Zoom in" $gap={20}><ZoomIcon plus /></ToolButton>
    <ToolDivider />
    <ToolButton type="button" aria-label="First page" $gap={24}>
      <Icon width={1}><path stroke="#b8b8b8" d="M4.500 6h11M5 14l5-4.500 5 4.500" /></Icon>
    </ToolButton>
    <ToolButton type="button" aria-label="Previous page" $gap={20}>
      <Icon width={1}><path stroke="#b8b8b8" d="M5 10l5-4.500 5 4.500M5 15l5-4.500 5 4.500" /></Icon>
    </ToolButton>
    <PageInput type="text" aria-label="Page" defaultValue="1  /  2" />
    <ToolButton type="button" aria-label="Next page">
      <Icon width={1}><path d="M5 5l5 4.500L15 5M5 10l5 4.500 5-4.500" /></Icon>
    </ToolButton>
  </ViewerTools>
);

const App = () => (
  <>
    <GlobalStyle />
    <Window>
      <TopBar />
      <Workspace>
        <LeftRail />
        <Thumbnails>
          <ThumbButton type="button">
            <ThumbFrame $active><FirstPreview /></ThumbFrame>
            1
          </ThumbButton>
          <ThumbButton type="button">
            <ThumbFrame><SecondPreview /></ThumbFrame>
            2
          </ThumbButton>
        </Thumbnails>
        <Viewer>
          <ViewerToolbar />
          <PageArea><TaxForm /></PageArea>
          <ExportPopover />
        </Viewer>
        <RightRail />
      </Workspace>
    </Window>
  </>
);

export default App;
